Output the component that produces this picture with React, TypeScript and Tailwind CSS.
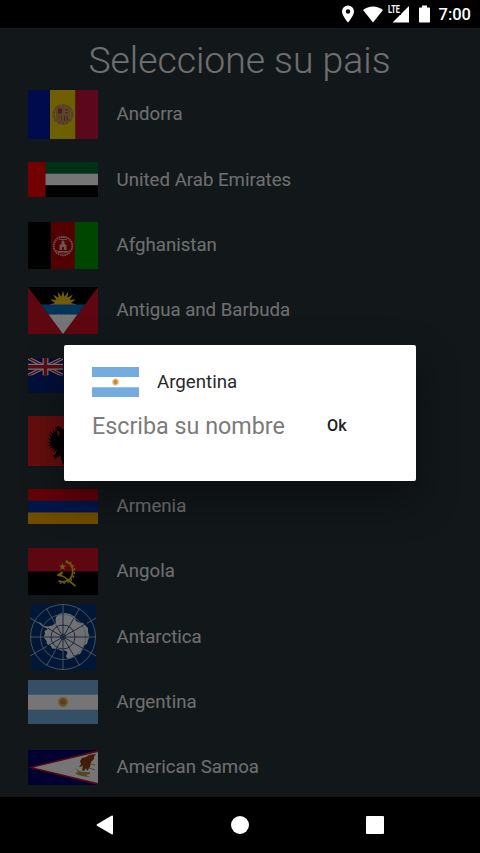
import type { ReactNode } from 'react';

type Country = {
  name: string;
  flag: ReactNode;
};

const starPoints = (cx: number, cy: number, outer: number, inner: number, count: number) =>
  Array.from({ length: count * 2 }, (_, i) => {
    const r = i % 2 === 0 ? outer : inner;
    const a = (Math.PI * i) / count - Math.PI / 2;
    return `${(cx + r * Math.cos(a)).toFixed(2)},${(cy + r * Math.sin(a)).toFixed(2)}`;
  }).join(' ');

const AndorraFlag = () => (
  <svg viewBox="0 0 70 49" className="h-[49px] w-[70px]">
    <rect width="22.5" height="49" fill="#0018a8" />
    <rect x="22" width="25.5" height="49" fill="#f0cf00" />
    <rect x="47.5" width="22.5" height="49" fill="#c8103e" />
    <g stroke="#b98d62" fill="none">
      <circle cx="35" cy="24.5" r="9.3" strokeWidth="2.4" strokeDasharray="3.4 0.8" />
      <path d="M28.500 17h13v10q0 4-6.500 6-6.500-2-6.500-6z" fill="#c9a05a" strokeWidth="1.4" />
      <path d="M35 17v15M28.500 24.500h13" />
    </g>
    <path d="M30 18.500h4v5h-4zM36 26h1.200v5H36zM38.600 26h1.200v4.500h-1.200z" fill="#b3432c" />
    <path d="M30.500 25.500h1v4h-1zM33 25.500h1v5h-1zM37 19h3v1.500h-3zM37 22h3v1.300h-3z" fill="#b55a22" />
  </svg>
);

const EmiratesFlag = () => (
  <svg viewBox="0 0 70 35" className="h-[35px] w-[70px]">
    <rect width="70" height="12" fill="#006b33" />
    <rect y="11.7" width="70" height="11.7" fill="#fff" />
    <rect y="23.4" width="70" height="11.6" fill="#000" />
    <rect width="17.5" height="35" fill="#f80000" />
  </svg>
);

const AfghanistanFlag = () => (
  <svg viewBox="0 0 70 47" className="h-[47px] w-[70px]">
    <rect width="23.5" height="47" fill="#000" />
    <rect x="23" width="24" height="47" fill="#b50000" />
    <rect x="46.7" width="23.3" height="47" fill="#009a00" />
    <g fill="none" stroke="#e2b8b0">
      <circle cx="35" cy="24" r="9.3" strokeWidth="1.8" strokeDasharray="1.6 0.7" />
      <path d="M28 28a8 6 0 0 0 14 0M31 17.500h8M32.500 15.500h5" strokeWidth=".9" />
    </g>
    <path d="M31.500 28v-5l2-1v-2.500q1.500-2 3 0V22l2 1v5h-2.600v-3h-1.800v3zM30 29h10v1H30z" fill="#e2b8b0" />
  </svg>
);

const AntiguaFlag = () => (
  <svg viewBox="0 0 70 47" className="h-[47px] w-[70px]">
    <rect width="70" height="47" fill="#ce1126" />
    <path d="M0 0h70L35 47z" fill="#000" />
    <polygon points={starPoints(35, 17.5, 14, 8, 16)} fill="#f5cb1a" />
    <path d="M13 17.500h44L49.500 27.800h-29z" fill="#0072c6" />
    <path d="M20.500 27.500h29L35 47z" fill="#fff" />
  </svg>
);

const AnguillaFlag = () => (
  <svg viewBox="0 0 70 35" className="h-[35px] w-[70px]">
    <rect width="70" height="35" fill="#00247d" />
    <svg width="35" height="17.5" viewBox="0 0 60 30">
      <path d="M0 0l60 30M60 0L0 30" stroke="#fff" strokeWidth="6" />
      <path d="M0 0l60 30M60 0L0 30" stroke="#cf142b" strokeWidth="2.5" />
      <path d="M30 0v30M0 15h60" stroke="#fff" strokeWidth="10" />
      <path d="M30 0v30M0 15h60" stroke="#cf142b" strokeWidth="6" />
    </svg>
    <path d="M46 9h14v9q0 6-7 9-7-3-7-9z" fill="#fff" />
  </svg>
);

const EAGLE_HALF =
  'M35 14l-3-3-4-1-3 2 3 1-2 2 4 0 1 4-2 1-3-7-1 4-3-5 1 6-4-3 2 5-4-2 3 5-4-1 4 4-5 0 5 2-5 2 6 0-4 3 6-2-3 4 5-3-2 4 5-3-3 6-4 1 4 1-1 3 4-3 4-1 1 4 3 5z';

const AlbaniaFlag = () => (
  <svg viewBox="0 0 70 50" className="h-[50px] w-[70px]">
    <rect width="70" height="50" fill="#dc1e20" />
    <path d={EAGLE_HALF} transform="translate(7 0) scale(.8 1)" />
    <path d={EAGLE_HALF} transform="translate(63 0) scale(-.8 1)" />
  </svg>
);

const ArmeniaFlag = () => (
  <svg viewBox="0 0 70 35" className="h-[35px] w-[70px]">
    <rect width="70" height="12" fill="#d90012" />
    <rect y="11.7" width="70" height="11.8" fill="#0033a0" />
    <rect y="23.4" width="70" height="11.6" fill="#f2a800" />
  </svg>
);

const AngolaFlag = () => (
  <svg viewBox="0 0 70 47" className="h-[47px] w-[70px]">
    <rect width="70" height="24" fill="#ce1126" />
    <rect y="23.5" width="70" height="23.5" fill="#000" />
    <g fill="none" stroke="#eac61c">
      <path d="M37.500 13.700q7.500 2 7.300 9.500-.3 9.300-8.300 10.500-3 .4-6-1" strokeWidth="1.8" />
      <path d="M38.300 12.800q8.700 3 8.200 10.800-.6 9.800-9.500 11.300-4 .6-7.500-1" strokeWidth="1.5" strokeDasharray="2 1.800" />
      <path d="M30.500 26.500q6.500 2 10.500 6.200 3.500 3.300 6.500 5.300" strokeWidth="1.8" />
    </g>
    <path d="M28.500 27l5-3.500 2 1.300-4 4z" fill="#eac61c" />
    <polygon points={starPoints(34.5, 18.8, 3.8, 1.6, 5)} fill="#eac61c" />
  </svg>
);

const AntarcticaFlag = () => (
  <svg viewBox="0 0 70 66" className="h-[66px] w-[70px]">
    <rect x="3" width="65" height="66" fill="#00347a" />
    <path
      d="M10 18L13 19 16 22 20 22.500 24 21.500 28 19 27.500 16 28 13 32 9.500 37 9 42 10 47 13 48 17 51 18.500 55 19 60 24 60 28 61.500 33 60 36 59 40 56.500 41 55 45 52 50 47 51 45 53.500 40 55 38 52.500 39.500 48 37 46.500 34 47 30 45 24 44.500 23 42 19 40 18.500 37 15.500 33 17 30 16.500 27 20 25 15 22.500 12 20.500z"
      fill="#f0f4f8"
    />
    <g fill="none" stroke="#aebccd" strokeWidth=".9">
      <circle cx="35" cy="33" r="32.5" />
      <circle cx="35" cy="33" r="22.500" />
      <path d="M2 33h13.500M61.500 33H68M35 .5v8.500M35 47v18.500M18.500 4.500L28 21M51.500 4.500L46.500 13M51.500 61.500L46 52M18.500 61.500L28 45.500M2 14l13 7.500M68 14l-9 5.200M2 52l17-9.800M68 52l-12-7" />
    </g>
    <g fill="none" stroke="#2d4c74" strokeWidth=".9">
      <circle cx="35" cy="33" r="12" />
      <circle cx="35" cy="33" r="2.500" />
      <path d="M16 33h45M35 9v38M28 21l18 31M46 14L28 45.500M20 24.300l36 20.700M58 19.700L19 42.200" />
    </g>
  </svg>
);

const ArgentinaFlag = ({ className }: { className: string }) => (
  <svg viewBox="0 0 70 44" preserveAspectRatio="none" className={className}>
    <rect width="70" height="44" fill="#74acdf" />
    <rect y="14.7" width="70" height="15" fill="#fff" />
    <polygon points={starPoints(35, 22, 5.700, 4, 16)} fill="#e3ac55" />
    <circle cx="35" cy="22" r="2.800" fill="#c98a35" />
  </svg>
);

const SamoaFlag = () => (
  <svg viewBox="0 0 70 35" className="h-[35px] w-[70px]">
    <rect width="70" height="35" fill="#00006b" />
    <path d="M0 17.500L70 0v35z" fill="#bd1021" />
    <path d="M5.500 17.500L70 2v31z" fill="#fff" />
    <path d="M52 11l2-3 4-1 3-2 7-1-2 3 0 2-3 3-1 5-3 4-1-3-2 3-2-1 1-4-4 1 2-3z" fill="#8f3e18" />
    <path d="M48 18l3 3 5 1 6 0 0 2-4 1 4 2-6-.5-6-1.500-3-2 3-1z" fill="#b39a50" />
    <path d="M62 14l5 1M61 18l6 2" stroke="#b7a08a" strokeWidth="1" />
  </svg>
);

const countries: Country[] = [
  { name: 'Andorra', flag: <AndorraFlag /> },
  { name: 'United Arab Emirates', flag: <EmiratesFlag /> },
  { name: 'Afghanistan', flag: <AfghanistanFlag /> },
  { name: 'Antigua and Barbuda', flag: <AntiguaFlag /> },
  { name: '', flag: <AnguillaFlag /> },
  { name: '', flag: <AlbaniaFlag /> },
  { name: 'Armenia', flag: <ArmeniaFlag /> },
  { name: 'Angola', flag: <AngolaFlag /> },
  { name: 'Antarctica', flag: <AntarcticaFlag /> },
  { name: 'Argentina', flag: <ArgentinaFlag className="h-11 w-[70px]" /> },
  { name: 'American Samoa', flag: <SamoaFlag /> },
];

const StatusBar = () => (
  <header className="flex h-7 shrink-0 items-center justify-end bg-black pr-[9px] text-white">
    <svg viewBox="0 0 12 18" className="mr-[9px] h-[18px] w-3" fill="currentColor">
      <path fillRule="evenodd" d="M6 .5a6 6 0 0 0-6 6c0 4.300 6 11 6 11s6-6.700 6-11a6 6 0 0 0-6-6zm0 3.800a2.200 2.200 0 1 1 0 4.400 2.200 2.200 0 0 1 0-4.400z" />
    </svg>
    <svg viewBox="0 0 20 17" className="mr-[5px] h-[17px] w-5" fill="currentColor">
      <path d="M10 16.500L0 4Q4.500.5 10 .5T20 4z" />
    </svg>
    <div className="relative mr-[10px] h-[18px] w-[21px]">
      <span className="absolute left-0 top-0 origin-left scale-x-[.7] font-['Roboto'] text-[10.500px] font-bold leading-[9px]">LTE</span>
      <svg viewBox="0 0 21 18" className="h-[18px] w-[21px]" fill="currentColor">
        <path d="M21 1v16.500H4.500L12 10h1V9z" />
      </svg>
    </div>
    <svg viewBox="0 0 11 18" className="mr-[9px] h-[18px] w-[11px]" fill="currentColor">
      <path d="M3 .5h5v2h2.300q.7 0 .7.7v13.500q0 .8-.8.8H.8q-.8 0-.8-.8V3.200q0-.7.7-.7H3z" />
    </svg>
    <span className="pt-[2px] text-[16.500px] font-medium leading-6">7:00</span>
  </header>
);

const NavigationBar = () => (
  <nav className="flex h-14 shrink-0 items-center justify-between bg-black px-24 text-white">
    <svg viewBox="0 0 18 20" className="h-5 w-[18px]" fill="currentColor">
      <path d="M1 9.300L15.500.7q1.500-.7 1.500.8v17q0 1.500-1.500.8L1 10.800Q0 10 1 9.300z" />
    </svg>
    <span className="size-[18.500px] rounded-full bg-white" />
    <span className="size-[18px] rounded-[1px] bg-white" />
  </nav>
);

const NameDialog = () => (
  <div className="h-[136px] w-[352px] rounded-[2px] bg-white pl-7 pt-[22px] shadow-[0_18px_42px_rgba(0,0,0,0.4)]">
    <div className="flex h-[31px] items-center">
      <ArgentinaFlag className="h-[30px] w-[47px]" />
      <span className="ml-[18px] pt-px text-[18.700px] text-[#2a2a2a]">Argentina</span>
    </div>
    <div className="mt-[13px] flex h-8 items-center">
      <span className="w-[235px] text-[23.300px] text-[#7b7b7b]">Escriba su nombre</span>
      <button className="text-[16.200px] font-medium text-[#212121]">Ok</button>
    </div>
  </div>
);

const App = () => {
  return (
    <div className="flex h-[853px] w-[480px] flex-col overflow-hidden bg-black font-['Roboto',sans-serif]">
      <StatusBar />

      <main className="relative h-[769px] shrink-0 overflow-hidden bg-[#283339]">
        <h1 className="h-[54px] pr-px pt-[5px] text-center text-[37.300px] font-light leading-[54px] text-[#f2f2f2]">
          Seleccione su pais
        </h1>

        {/* Country list */}
        <ul>
          {countries.map((country, index) => (
            <li key={index} className="flex h-[65.300px] items-center gap-[18.600px] pl-7">
              <span className="w-[70px] shrink-0">{country.flag}</span>
              <span className="pt-[1.500px] text-[18.650px] text-[#f2f2f2]">{country.name}</span>
            </li>
          ))}
        </ul>

        {/* Scrim with the name prompt */}
        <div className="absolute inset-0 flex items-center justify-center bg-black/54">
          <NameDialog />
        </div>
      </main>

      <NavigationBar />
    </div>
  );
};

export default App;
